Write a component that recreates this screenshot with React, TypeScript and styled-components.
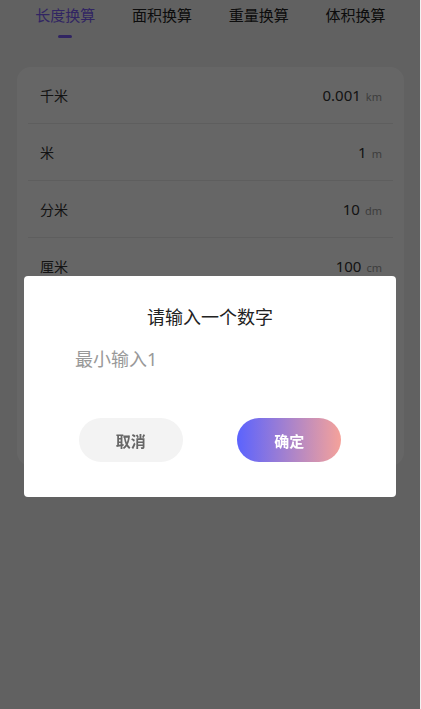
import styled, { createGlobalStyle } from 'styled-components';
import { useState } from 'react';

const GlobalStyle = createGlobalStyle`
  html, body {
    margin: 0;
    padding: 0;
    background: #f2f2f2;
  }
  body {
    font-family: "Noto Sans", "Noto Sans CJK SC", sans-serif;
    color: #333;
  }
`;

const Page = styled.div`
  width: 421px;
  min-height: 709px;
  background: #f2f2f2;
`;

const TabBar = styled.div`
  display: flex;
  padding: 0 17px;
`;

const Tab = styled.div<{ active: boolean }>`
  flex: 1;
  display: flex;
  flex-direction: column;
  align-items: center;
  padding-top: 4px;
  font-size: 15px;
  line-height: 22px;
  color: ${(props) => (props.active ? '#7b5cf6' : '#222')};
`;

const TabLine = styled.div<{ active: boolean }>`
  width: 14px;
  height: 3px;
  margin-top: 9px;
  border-radius: 2px;
  background: ${(props) => (props.active ? '#7b5cf6' : 'transparent')};
`;

const Card = styled.div`
  margin: 29px 17px 0;
  padding: 0 11px;
  background: #fff;
  border-radius: 14px;
`;

const Row = styled.div`
  height: 57px;
  display: flex;
  align-items: center;
  justify-content: space-between;
  padding: 0 11px 0 12px;
  border-bottom: 1px solid #ececec;
  box-sizing: border-box;

  &:last-child {
    border-bottom: none;
  }
`;

const Label = styled.span`
  font-size: 14px;
  color: #333;
`;

const Value = styled.span`
  font-size: 15px;
  color: #333;
`;

const Unit = styled.span`
  margin-left: 5px;
  font-size: 11px;
  color: #999;
`;

const Mask = styled.div`
  position: fixed;
  top: 0;
  left: 0;
  width: 420px;
  height: 709px;
  background: rgba(0, 0, 0, 0.6);
`;

const Dialog = styled.div`
  position: fixed;
  top: 276px;
  left: 24px;
  width: 372px;
  height: 221px;
  background: #fff;
  border-radius: 4px;
  display: flex;
  flex-direction: column;
  box-sizing: border-box;
  padding-top: 28px;
`;

const Title = styled.div`
  text-align: center;
  font-size: 18px;
  line-height: 26px;
  color: #222;
`;

const Input = styled.input`
  margin: 16px 0 0 51px;
  width: 260px;
  height: 26px;
  border: none;
  outline: none;
  padding: 0;
  font-family: inherit;
  font-size: 18px;
  line-height: 26px;
  color: #333;

  &::placeholder {
    color: #999;
  }
`;

const Buttons = styled.div`
  margin-top: 46px;
  display: flex;
  justify-content: space-evenly;
`;

const Button = styled.button<{ primary?: boolean }>`
  width: 104px;
  height: 44px;
  border: none;
  border-radius: 22px;
  font-family: inherit;
  font-size: 15px;
  font-weight: 700;
  color: ${(props) => (props.primary ? '#fff' : '#666')};
  background: ${(props) =>
    props.primary ? 'linear-gradient(90deg, #5b63fe, #f5a29a)' : '#f3f3f3'};
  cursor: pointer;
`;

const tabs = ['长度换算', '面积换算', '重量换算', '体积换算'];

const units = [
  { name: '千米', value: '0.001', unit: 'km' },
  { name: '米', value: '1', unit: 'm' },
  { name: '分米', value: '10', unit: 'dm' },
  { name: '厘米', value: '100', unit: 'cm' },
  { name: '毫米', value: '1000', unit: 'mm' },
  { name: '微米', value: '1000000', unit: 'μm' },
  { name: '纳米', value: '1000000000', unit: 'nm' },
];

export default function App() {
  const [current, setCurrent] = useState(0);
  const [input, setInput] = useState('');

  return (
    <Page>
      <GlobalStyle />
      <TabBar>
        {tabs.map((t, i) => (
          <Tab key={t} active={i === current} onClick={() => setCurrent(i)}>
            {t}
            <TabLine active={i === current} />
          </Tab>
        ))}
      </TabBar>
      <Card>
        {units.map((u) => (
          <Row key={u.unit}>
            <Label>{u.name}</Label>
            <span>
              <Value>{u.value}</Value>
              <Unit>{u.unit}</Unit>
            </span>
          </Row>
        ))}
      </Card>

      <Mask />
      <Dialog>
        <Title>请输入一个数字</Title>
        <Input
          placeholder="最小输入1"
          value={input}
          onChange={(e) => setInput(e.target.value)}
        />
        <Buttons>
          <Button>取消</Button>
          <Button primary>确定</Button>
        </Buttons>
      </Dialog>
    </Page>
  );
}
